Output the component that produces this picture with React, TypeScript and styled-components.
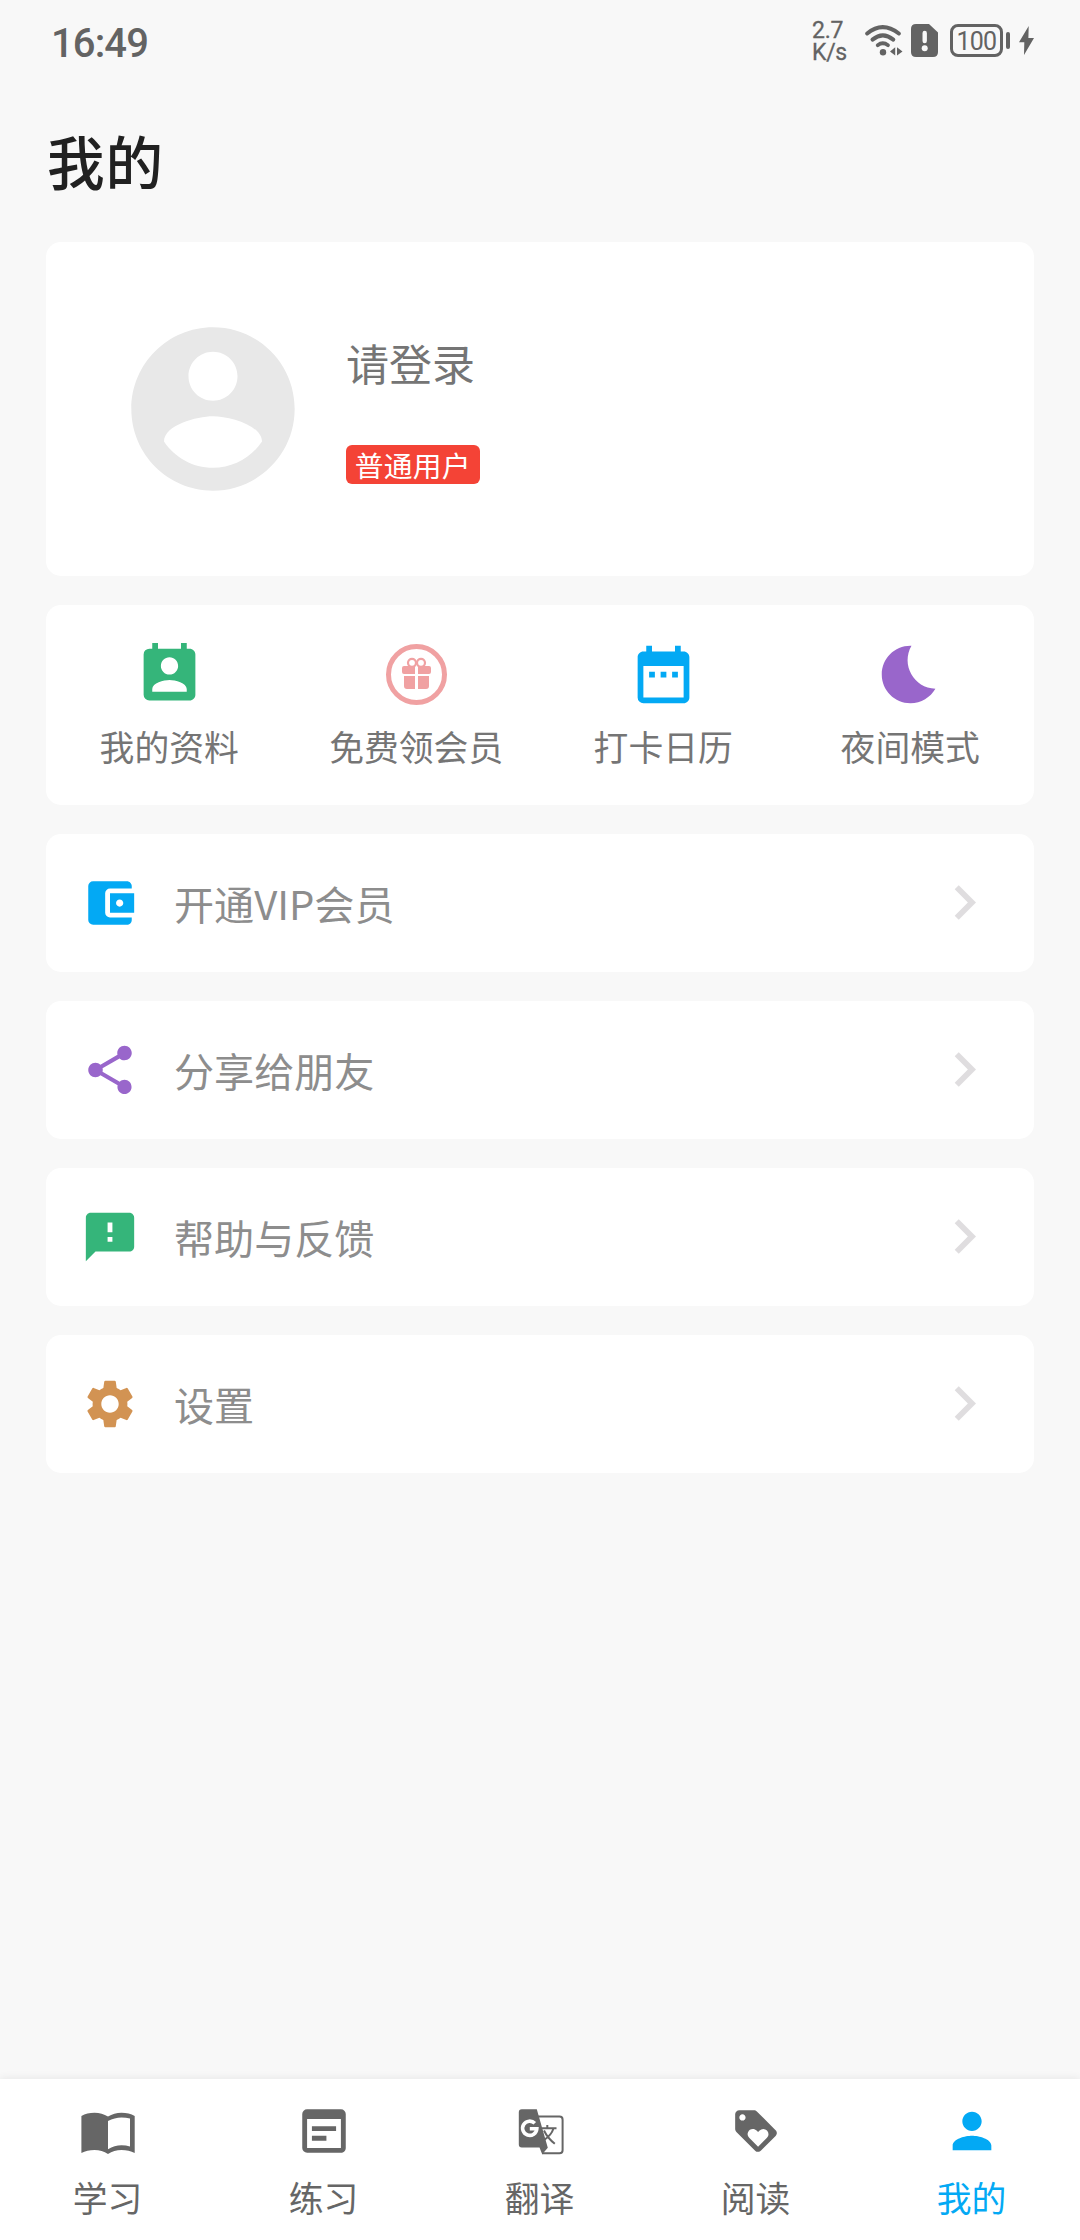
import React from 'react';
import styled, { createGlobalStyle } from 'styled-components';
import {
  MdAccountBalanceWallet,
  MdBedtime,
  MdChevronRight,
  MdDateRange,
  MdFeedback,
  MdLoyalty,
  MdPermContactCalendar,
  MdPerson,
  MdSettings,
  MdShare,
  MdWysiwyg,
} from 'react-icons/md';

const GlobalStyle = createGlobalStyle`
  * { box-sizing: border-box; }
  body {
    margin: 0;
    background: #f8f8f8;
    font-family: "Noto Sans CJK SC", "Noto Sans", sans-serif;
  }
  svg { display: block; flex: none; }
`;

const Screen = styled.div`
  width: 1080px;
  height: 2240px;
  display: flex;
  flex-direction: column;
  background: #f8f8f8;
  overflow: hidden;
`;

const StatusBar = styled.header`
  height: 81px;
  flex: none;
  display: flex;
  align-items: center;
  justify-content: space-between;
  padding: 0 46px 0 51px;
  color: #636363;
  font-family: Roboto, sans-serif;
`;

const Clock = styled.div`
  font-size: 40px;
  font-weight: 500;
  line-height: 48px;
  letter-spacing: -0.9px;
  padding-top: 7px;
`;

const StatusIcons = styled.div`
  display: flex;
  align-items: center;
`;

const NetSpeed = styled.div`
  width: 52px;
  font-size: 23px;
  line-height: 22px;
  letter-spacing: -0.3px;
  -webkit-text-stroke: 0.3px #636363;
  padding-top: 3px;
`;

const SimSlot = styled.div`
  margin-left: 7px;
`;

const Battery = styled.div`
  width: 53px;
  height: 33px;
  margin-left: 12px;
  border: 3px solid #636363;
  border-radius: 8px;
  font-size: 25px;
  line-height: 29px;
  letter-spacing: -0.8px;
  text-align: center;
`;

const BatteryTip = styled.div`
  width: 4px;
  height: 17px;
  margin: 0 9px 0 3px;
  border-radius: 2px;
  background: #636363;
`;

const Title = styled.h1`
  margin: 0;
  height: 161px;
  flex: none;
  padding: 35px 0 0 47px;
  font-size: 57.6px;
  font-weight: 500;
  line-height: 88px;
  letter-spacing: 1px;
  color: #212121;
`;

const Content = styled.main`
  flex: 1;
  display: flex;
  flex-direction: column;
  gap: 29px;
  padding: 0 46px;
`;

const Card = styled.section`
  display: flex;
  align-items: center;
  background: #fff;
  border-radius: 15px;
`;

const ProfileCard = styled(Card)`
  height: 334px;
  padding-left: 69px;
  gap: 35px;
  color: #e8e8e8;
`;

const ProfileText = styled.div`
  display: flex;
  flex-direction: column;
  align-items: flex-start;
  gap: 53px;
  padding-bottom: 2px;
`;

const LoginText = styled.div`
  font-size: 43px;
  line-height: 60px;
  color: #757575;
`;

const Badge = styled.div`
  height: 39px;
  padding: 0 9.4px;
  border-radius: 6px;
  background: #f44336;
  color: #fff;
  font-size: 28.8px;
  line-height: 39px;
  letter-spacing: 0.2px;
  text-indent: -0.6px;
`;

const QuickCard = styled(Card)`
  height: 200px;
`;

const QuickItem = styled.div<{ $color: string }>`
  flex: 1;
  height: 100%;
  display: flex;
  flex-direction: column;
  align-items: center;
  padding-top: 35px;
  color: ${(p) => p.$color};
`;

const QuickLabel = styled.span`
  margin-top: 12px;
  padding-right: 0.6px;
  font-size: 34.8px;
  line-height: 50px;
  color: #757575;
`;

const RowCard = styled(Card)<{ $color: string }>`
  height: 138px;
  padding: 0 35px;
  color: ${(p) => p.$color};
`;

const RowLabel = styled.span`
  flex: 1;
  margin-left: 35px;
  font-size: 40.1px;
  line-height: 56px;
  color: #8d8d8d;
`;

const Chevron = styled(MdChevronRight)`
  width: 69px;
  height: 69px;
  margin-bottom: 1px;
  color: #dfdddf;
`;

const NavBar = styled.nav`
  height: 161px;
  flex: none;
  display: flex;
  background: #fff;
  box-shadow: 0 -1px 8px rgba(0, 0, 0, 0.07);
`;

const NavItem = styled.div<{ $active?: boolean }>`
  flex: 1;
  display: flex;
  flex-direction: column;
  align-items: center;
  padding-top: 23px;
  color: ${(p) => (p.$active ? '#03a9f4' : '#666')};
`;

const NavIcon = styled.div`
  width: 58px;
  height: 58px;
  display: flex;
  align-items: center;
  justify-content: center;
`;

const NavLabel = styled.span`
  margin-top: 12px;
  padding-right: 1px;
  font-size: 34.8px;
  line-height: 50px;
`;

const WifiIcon = () => (
  <svg width="40" height="34" viewBox="0 0 40 34" fill="none" stroke="currentColor" strokeWidth="4" strokeLinecap="round">
    <path d="M3.2 9.5Q18.5 -3.2 34.8 9.5" />
    <path d="M8.5 15.6Q18.8 7.2 29.3 15.6" />
    <path d="M13.7 21.2Q18.8 17.4 24 21.2" strokeWidth="3.8" />
    <circle cx="19" cy="28.2" r="3.2" fill="currentColor" stroke="none" />
    <path d="M26 27.5L31.2 23.2V31.5zM38.5 27.5L33 23.2V31.5z" fill="currentColor" stroke="none" />
  </svg>
);

const SimAlertIcon = () => (
  <svg width="27" height="33" viewBox="0 0 27 33">
    <path d="M5 0H18L27 8.5V28Q27 33 22 33H5Q0 33 0 28V5Q0 0 5 0Z" fill="currentColor" />
    <path d="M13.7 9V17" stroke="#f8f8f8" strokeWidth="4.4" strokeLinecap="round" />
    <circle cx="13.7" cy="24.3" r="3" fill="#f8f8f8" />
  </svg>
);

const BoltIcon = () => (
  <svg width="15" height="29" viewBox="0 0 15 29" fill="currentColor">
    <path d="M9.7 0L0 16.2H5.3L5 29L15 12H9.4Z" />
  </svg>
);

const AvatarIcon = () => (
  <svg width="196" height="196" viewBox="0 0 24 24" fill="currentColor">
    <path d="M12 2C6.48 2 2 6.48 2 12s4.48 10 10 10 10-4.48 10-10S17.52 2 12 2zm0 3c1.66 0 3 1.34 3 3s-1.34 3-3 3-3-1.34-3-3 1.34-3 3-3zm0 14.2c-2.5 0-4.71-1.28-6-3.22.03-1.99 4-3.08 6-3.08 1.99 0 5.97 1.09 6 3.08-1.29 1.94-3.5 3.22-6 3.22z" />
  </svg>
);

const GiftIcon = () => (
  <svg width="69" height="69" viewBox="0 0 69 69" fill="currentColor">
    <circle cx="34.5" cy="34.5" r="28" fill="none" stroke="currentColor" strokeWidth="5" />
    <path d="M22 26H33V34H22Q20 34 20 32V28Q20 26 22 26ZM36 26H47Q49 26 49 28V32Q49 34 47 34H36Z" />
    <path d="M22 36H33V49H25Q22 49 22 46ZM36 36H47V46Q47 49 44 49H36Z" />
    <g fill="none" stroke="currentColor" strokeWidth="2.2">
      <circle cx="30" cy="22.8" r="4" />
      <circle cx="39" cy="22.8" r="4" />
    </g>
  </svg>
);

const BookIcon = () => (
  <svg width="58" height="58" viewBox="0 0 58 58" fill="currentColor">
    <path
      fillRule="evenodd"
      d="M2.4 14Q8 10.7 15.5 10.7Q23 10.7 29 14.6Q35 10.7 42.5 10.7Q50 10.7 55.7 14V51Q50 48 42.5 48Q35 48 29 52Q23 48 15.5 48Q8 48 2.4 51ZM29 19V47.3Q35.5 43.2 42.5 43.2Q47 43.2 51 44.4V16.6Q47 15.5 42.5 15.5Q35.5 15.5 29 19Z"
    />
  </svg>
);

// Two overlapping sheets: a solid front panel and an outlined page behind it.
const TranslateIcon = () => (
  <svg width="49" height="49" viewBox="0 0 49 49" fill="none" stroke="currentColor" strokeWidth="2">
    <path d="M22 9.6H43.5Q46.6 9.6 46.6 12.7V43.2Q46.6 46.3 43.5 46.3H26" />
    <path d="M31.3 18V21.3M26 21.3H40.5M37.3 22Q35.3 28 28.5 32.6M28 23.5Q31.5 31 38.8 36.8" />
    <path
      d="M5.8 2.2H20.8L31.8 40.8L26.2 47.2L23.5 40.5H5.8Q2.8 40.5 2.8 37.5V5.2Q2.8 2.2 5.8 2.2Z"
      fill="currentColor"
      stroke="none"
    />
    <path d="M18.8 16.3A7.1 7.1 0 1 0 20.8 21.8H13.8" stroke="#fff" strokeWidth="3.6" />
  </svg>
);

const quickItems = [
  { label: '我的资料', color: '#35b57a', icon: <MdPermContactCalendar size={69} /> },
  { label: '免费领会员', color: '#f0a1a2', icon: <GiftIcon /> },
  { label: '打卡日历', color: '#03a9f4', icon: <MdDateRange size={69} /> },
  { label: '夜间模式', color: '#9966cb', icon: <MdBedtime size={69} /> },
];

const rows = [
  { label: '开通VIP会员', color: '#03a9f4', icon: <MdAccountBalanceWallet size={58} /> },
  { label: '分享给朋友', color: '#9966cb', icon: <MdShare size={58} /> },
  { label: '帮助与反馈', color: '#35b57a', icon: <MdFeedback size={58} /> },
  { label: '设置', color: '#d29353', icon: <MdSettings size={58} /> },
];

const navItems = [
  { label: '学习', icon: <BookIcon /> },
  { label: '练习', icon: <MdWysiwyg size={58} /> },
  { label: '翻译', icon: <TranslateIcon /> },
  { label: '阅读', icon: <MdLoyalty size={50} /> },
  { label: '我的', icon: <MdPerson size={58} />, active: true },
];

export default function App() {
  return (
    <>
      <GlobalStyle />
      <Screen>
        <StatusBar>
          <Clock>16:49</Clock>
          <StatusIcons>
            <NetSpeed>
              2.7
              <br />
              K/s
            </NetSpeed>
            <WifiIcon />
            <SimSlot>
              <SimAlertIcon />
            </SimSlot>
            <Battery>100</Battery>
            <BatteryTip />
            <BoltIcon />
          </StatusIcons>
        </StatusBar>
        <Title>我的</Title>
        <Content>
          <ProfileCard>
            <AvatarIcon />
            <ProfileText>
              <LoginText>请登录</LoginText>
              <Badge>普通用户</Badge>
            </ProfileText>
          </ProfileCard>
          <QuickCard>
            {quickItems.map((q) => (
              <QuickItem key={q.label} $color={q.color}>
                {q.icon}
                <QuickLabel>{q.label}</QuickLabel>
              </QuickItem>
            ))}
          </QuickCard>
          {rows.map((r) => (
            <RowCard key={r.label} $color={r.color}>
              {r.icon}
              <RowLabel>{r.label}</RowLabel>
              <Chevron />
            </RowCard>
          ))}
        </Content>
        <NavBar>
          {navItems.map((n) => (
            <NavItem key={n.label} $active={n.active}>
              <NavIcon>{n.icon}</NavIcon>
              <NavLabel>{n.label}</NavLabel>
            </NavItem>
          ))}
        </NavBar>
      </Screen>
    </>
  );
}
